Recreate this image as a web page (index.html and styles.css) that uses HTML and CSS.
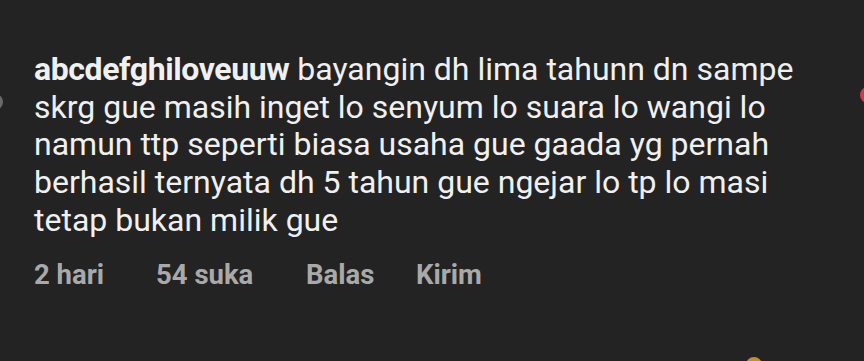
FILE: index.html
```html
<!DOCTYPE html>
<html lang="id">
<head>
	<meta charset="UTF-8">
	<title>Komentar</title>
	<link rel="stylesheet" href="styles.css">
</head>
<body>
<section class="comment">
	<div class="avatar"></div>
	<div class="body">
		<p class="text"><b class="user">abcdefghiloveuuw</b> bayangin dh lima tahunn dn sampe skrg gue masih inget lo senyum lo suara lo wangi lo namun ttp seperti biasa usaha gue gaada yg pernah berhasil ternyata dh 5 tahun gue ngejar lo tp lo masi tetap bukan milik gue</p>
		<ul class="meta">
			<li>2 hari</li>
			<li>54 suka</li>
			<li>Balas</li>
			<li>Kirim</li>
		</ul>
	</div>
	<div class="like"></div>
	<span class="next"></span>
</section>
</body>
</html>
```

FILE: styles.css
```css
html, body {
	margin: 0;
	padding: 0;
	width: 100%;
	height: 100%;
	background: #232323;
	overflow: hidden;
}
ul { list-style: none; margin: 0; padding: 0; }
p { margin: 0; }

.comment {
	position: relative;
	height: 361px;
	display: flex;
	align-items: flex-start;
	font-family: Roboto, "Liberation Sans", sans-serif;
}
.avatar {
	flex: none;
	width: 16px;
	height: 16px;
	margin: 94px 0 0 -13px;
	border-radius: 50%;
	background: #6a6a6a;
}
.body {
	flex: none;
	width: 775px;
	padding: 51px 0 0 31px;
}
.text {
	font-size: 32px;
	line-height: 37.7px;
	color: #f0f0f0;
}
.user {
	font-weight: 700;
	letter-spacing: -0.4px;
}
.meta {
	display: flex;
	margin-top: 20px;
	font-size: 27.5px;
	line-height: 30px;
	font-weight: 700;
	color: #a9a9a9;
}
.meta li:nth-child(1) { width: 122px; }
.meta li:nth-child(2) { width: 150px; }
.meta li:nth-child(3) { width: 110px; }
.like {
	flex: none;
	width: 16px;
	height: 16px;
	margin: 87px 0 0 auto;
	margin-right: -12px;
	border-radius: 50%;
	background: #d8344e;
}
.next {
	position: absolute;
	left: 746px;
	top: 357px;
	width: 16px;
	height: 16px;
	border-radius: 50%;
	background: #c8901e;
}
```
